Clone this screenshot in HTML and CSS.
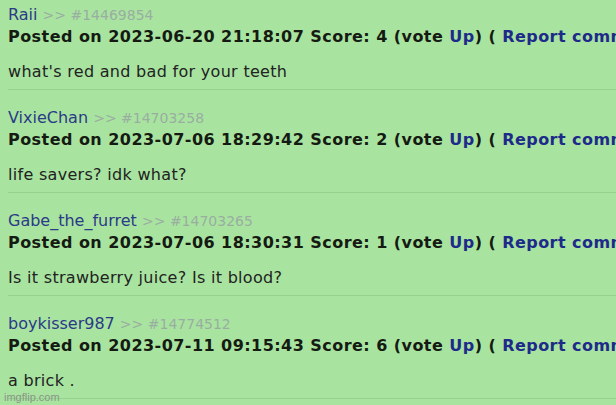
FILE: index.html
```html
<!DOCTYPE html>
<html>
<head>
<meta charset="utf-8">
<link rel="stylesheet" href="styles.css">
</head>
<body>
<div class="comments">
  <div class="comment">
    <div class="meta"><span class="user">Raii</span> <span class="ref">&gt;&gt; #14469854</span></div>
    <div class="posted">Posted on 2023-06-20 21:18:07 Score: 4 (vote <span class="link">Up</span>) ( <span class="link">Report comment</span> )</div>
    <div class="text">what's red and bad for your teeth</div>
  </div>
  <div class="comment">
    <div class="meta"><span class="user">VixieChan</span> <span class="ref">&gt;&gt; #14703258</span></div>
    <div class="posted">Posted on 2023-07-06 18:29:42 Score: 2 (vote <span class="link">Up</span>) ( <span class="link">Report comment</span> )</div>
    <div class="text">life savers? idk what?</div>
  </div>
  <div class="comment">
    <div class="meta"><span class="user">Gabe_the_furret</span> <span class="ref">&gt;&gt; #14703265</span></div>
    <div class="posted">Posted on 2023-07-06 18:30:31 Score: 1 (vote <span class="link">Up</span>) ( <span class="link">Report comment</span> )</div>
    <div class="text">Is it strawberry juice? Is it blood?</div>
  </div>
  <div class="comment">
    <div class="meta"><span class="user">boykisser987</span> <span class="ref">&gt;&gt; #14774512</span></div>
    <div class="posted">Posted on 2023-07-11 09:15:43 Score: 6 (vote <span class="link">Up</span>) ( <span class="link">Report comment</span> )</div>
    <div class="text">a brick .</div>
  </div>
</div>
<div class="watermark">imgflip.com</div>
</body>
</html>
```
FILE: styles.css
```css
html, body {
  margin: 0;
  padding: 0;
  width: 616px;
  height: 405px;
  overflow: hidden;
  background: #a8e4a0;
}
body {
  position: relative;
  font-family: "DejaVu Sans", Verdana, sans-serif;
  font-size: 16px;
  line-height: 21px;
  color: #1c1c1c;
}
.comments {
  padding: 4px 0 0 8px;
}
.comment {
  padding-bottom: 7px;
  border-bottom: 1px solid #96d28e;
  margin-bottom: 17px;
  white-space: nowrap;
  overflow: hidden;
}
.user {
  color: #2b3a86;
}
.ref {
  color: #9aaea0;
  font-size: 14px;
}
.posted {
  font-weight: bold;
  letter-spacing: 0.45px;
  color: #151a12;
}
.link {
  color: #1e2a8a;
}
.text {
  margin-top: 14px;
  letter-spacing: 0.3px;
  color: #222;
}
.watermark {
  position: absolute;
  left: 4px;
  top: 391px;
  font-family: "Liberation Sans", Arial, sans-serif;
  font-size: 11px;
  line-height: 13px;
  color: #8a9488;
}
```
